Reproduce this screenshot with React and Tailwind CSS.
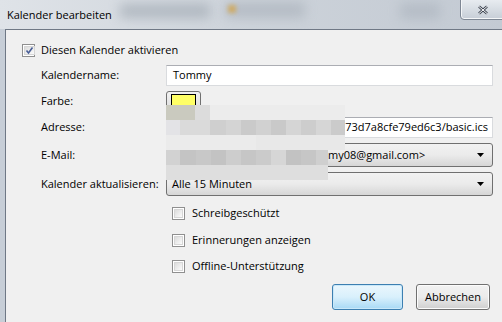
import React from 'react';

const font = { fontFamily: '"Open Sans", "Noto Sans", sans-serif' };

const Check = ({ checked }) => (
  <span className="w-[13px] h-[13px] border border-[#8f8f8f] bg-white p-[1px] flex shrink-0">
    <span className="flex-1 border border-[#d6d6d6] bg-gradient-to-br from-[#dcdcdc] to-[#fbfbfb] flex items-center justify-center">
      {checked && (
        <svg width="9" height="9" viewBox="0 0 9 9">
          <path d="M1.5 4.5 L3.5 7 L7.5 1.5" fill="none" stroke="#4a5f97" strokeWidth="1.6" />
        </svg>
      )}
    </span>
  </span>
);

const Arrow = () => (
  <svg width="7" height="4" viewBox="0 0 7 4" className="mr-[8px]">
    <path d="M0 0 H7 L3.5 4 Z" fill="#000" />
  </svg>
);

const mosaicRows = [
  { y: 0, cells: [[0, 29, '#cacabf'], [29, 15, '#dcdcdc'], [44, 135, '#ececec']] },
  {
    y: 15,
    cells: [
      [0, 14, '#e3e3e6'], [14, 30, '#dadada'], [44, 16, '#cfcfcf'], [60, 15, '#d4d4d4'],
      [75, 15, '#cacaca'], [90, 15, '#d1d1d1'], [105, 15, '#c9c9c9'], [120, 15, '#d5d5d5'],
      [135, 15, '#cdcdcd'], [150, 15, '#d6d6d6'], [165, 14, '#cbcbcb'],
    ],
  },
  { y: 30, cells: [[0, 90, '#ebebeb'], [90, 89, '#e8e8e8']] },
  {
    y: 45,
    cells: [
      [0, 14, '#d2d2d2'], [14, 16, '#c4c4c4'], [30, 15, '#c8c8c8'], [45, 15, '#c3c3c3'],
      [60, 15, '#cdcdcd'], [75, 15, '#c6c6c6'], [90, 15, '#cbcbcb'], [105, 15, '#d6d6d6'],
      [120, 15, '#c2c2c2'], [135, 15, '#c6c6c6'], [150, 12, '#cfcfcf'],
    ],
  },
  { y: 60, cells: [[0, 162, '#dedede']] },
];

// pixelated (censored) part of the screenshot
const Mosaic = () => (
  <svg width="179" height="75" className="absolute left-[160px] top-[75px]">
    {mosaicRows.map((row) =>
      row.cells.map(([x, w, c]) => <rect key={row.y + '-' + x} x={x} y={row.y} width={w} height="15" fill={c} />)
    )}
  </svg>
);

const Row = ({ label, className, children }) => (
  <div className={`flex items-center ${className}`}>
    <span className="w-[125px] shrink-0 whitespace-nowrap">{label}</span>
    <div className="w-[327px]">{children}</div>
  </div>
);

export default function App() {
  return (
    <div className="w-[502px] h-[322px] overflow-hidden bg-[#c7ced7] text-[11px] text-black flex flex-col" style={font}>
      <div className="relative h-[29px] shrink-0 bg-gradient-to-r from-[#dfe3e8] via-[#cdd3da] to-[#c3cad3] overflow-hidden">
        <div className="absolute left-[120px] top-[4px] w-[90px] h-[14px] bg-[#9aa3ad] blur-[6px] opacity-60" />
        <div className="absolute left-[225px] top-[2px] w-[80px] h-[16px] bg-[#a6aeb8] blur-[6px] opacity-60" />
        <div className="absolute left-[228px] top-[5px] w-[8px] h-[8px] bg-[#d6a240] blur-[2px] opacity-70" />
        <div className="absolute left-[400px] top-[3px] w-[40px] h-[16px] bg-[#aab2bc] blur-[6px] opacity-60" />
        <span className="absolute left-[7px] top-[7px]">Kalender bearbeiten</span>
        <div className="absolute left-[460px] -top-[2px] w-[46px] h-[22px] rounded-b-[4px] border border-[#7e8794] bg-gradient-to-b from-[#e9edf1] to-[#c7ced7] shadow-[inset_0_0_0_1px_#f4f6f8] flex items-center justify-center pt-[2px]">
          <svg width="12" height="10" viewBox="0 0 12 10">
            <path d="M2 1.5 L10 8.5 M10 1.5 L2 8.5" stroke="#3f4652" strokeWidth="2.6" />
            <path d="M2 1.5 L10 8.5 M10 1.5 L2 8.5" stroke="#f7f8fa" strokeWidth="1" />
          </svg>
        </div>
      </div>
      <div className="flex-1 ml-[5px] border-l border-t border-[#6f7885] bg-[#f0f0f0] relative pl-[16px] pt-[13px]">
        <div className="flex items-center gap-[6px] h-[14px]">
          <Check checked />
          <span>Diesen Kalender aktivieren</span>
        </div>

        <div className="pl-[19px] flex flex-col">
          <Row label="Kalendername:" className="mt-[8px] h-[21px]">
            <div className="h-[21px] bg-white border border-[#d9dbde] border-t-[#abadb3] flex items-center pl-[6px]">Tommy</div>
          </Row>
          <Row label="Farbe:" className="mt-[5px] h-[20px]">
            <div className="w-[35px] h-[20px] rounded-[3px] border border-[#707070] bg-gradient-to-b from-[#f2f2f2] to-[#dcdcdc] flex items-start pt-[2px] pl-[4px]">
              <span className="w-[25px] h-[13px] bg-[#ffff66] border border-black" />
            </div>
          </Row>
          <Row label="Adresse:" className="mt-[6px] h-[21px]">
            <div className="h-[21px] bg-white border border-[#d9dbde] border-t-[#abadb3] flex items-center justify-end pr-[4px]">73d7a8cfe79ed6c3/basic.ics</div>
          </Row>
          <Row label="E-Mail:" className="mt-[5px] h-[24px]">
            <div className="h-[24px] rounded-[3px] border border-[#707070] bg-gradient-to-b from-[#f2f2f2] via-[#ebebeb] to-[#d6d6d6] flex items-center">
              <span className="pl-[161px] flex-1">my08@gmail.com&gt;</span>
              <Arrow />
            </div>
          </Row>
          <Row label="Kalender aktualisieren:" className="mt-[5px] h-[24px]">
            <div className="h-[24px] rounded-[3px] border border-[#707070] bg-gradient-to-b from-[#f2f2f2] via-[#ebebeb] to-[#d6d6d6] flex items-center">
              <span className="pl-[5px] flex-1">Alle 15 Minuten</span>
              <Arrow />
            </div>
          </Row>

          <div className="pl-[131px] flex flex-col">
            <div className="mt-[10px] h-[14px] flex items-center gap-[7px]">
              <Check />
              <span>Schreibgeschützt</span>
            </div>
            <div className="mt-[13px] h-[14px] flex items-center gap-[7px]">
              <Check />
              <span>Erinnerungen anzeigen</span>
            </div>
            <div className="mt-[12px] h-[14px] flex items-center gap-[7px]">
              <Check />
              <span>Offline-Unterstützung</span>
            </div>
          </div>

          <div className="mt-[11px] flex justify-end gap-[13px] pr-[12px]">
            <button className="w-[71px] h-[26px] rounded-[3px] border border-[#3c7fb1] bg-gradient-to-b from-[#eaf6fd] via-[#d9f0fc] to-[#a7d9f5] shadow-[inset_0_0_0_1px_#c9e8f9]">OK</button>
            <button className="w-[74px] h-[26px] rounded-[3px] border border-[#707070] bg-gradient-to-b from-[#f2f2f2] via-[#ebebeb] to-[#cfcfcf] shadow-[inset_0_0_0_1px_#fcfcfc]">Abbrechen</button>
          </div>
        </div>

        <Mosaic />
      </div>
    </div>
  );
}
